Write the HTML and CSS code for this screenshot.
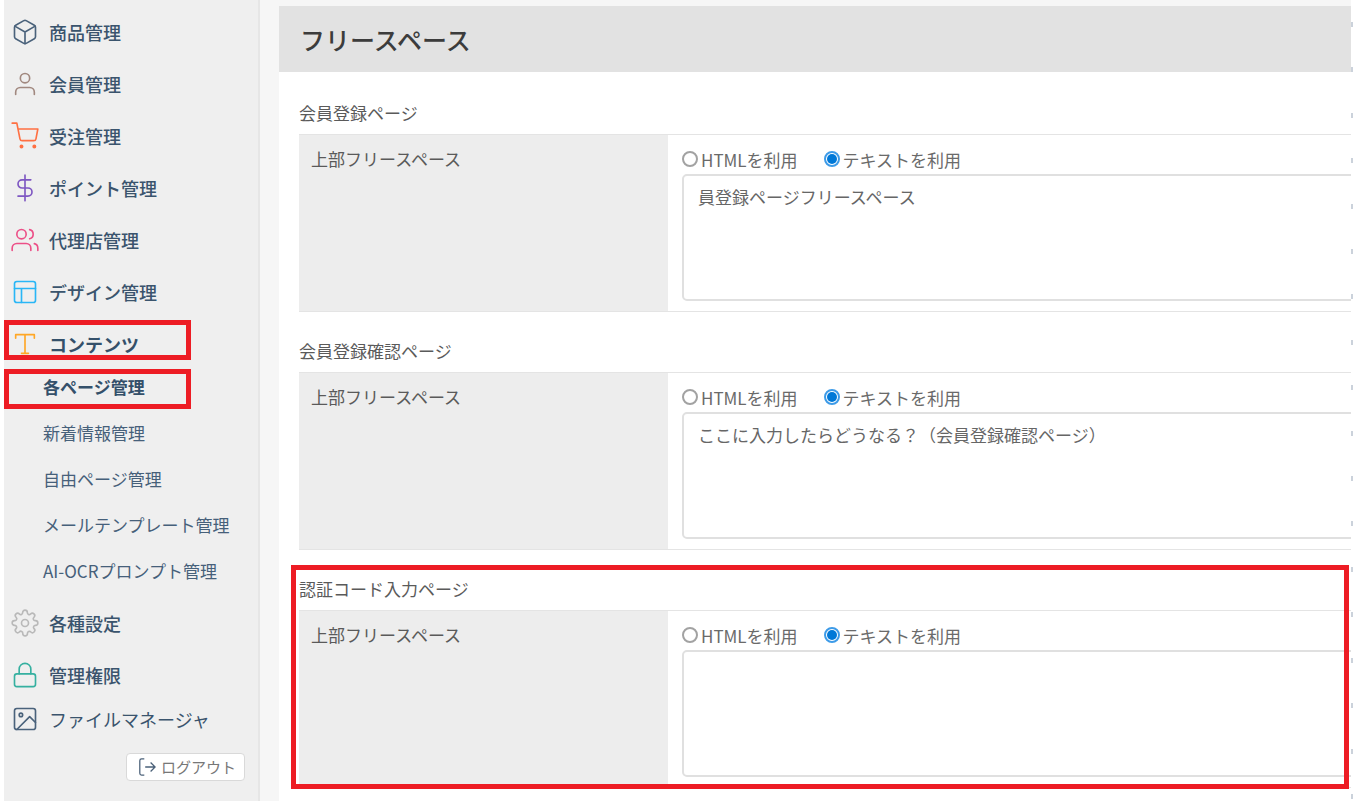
FILE: index.html
```html
<!DOCTYPE html>
<html lang="ja">
<head>
<meta charset="utf-8">
<meta name="viewport" content="width=device-width, initial-scale=1">
<title>フリースペース</title>
<link rel="stylesheet" href="styles.css">
</head>
<body>
<div class="app">
  <aside class="sidebar">
    <nav>
      <ul class="menu">
        <li><a class="item" href="#"><svg class="icon navy" viewBox="0 0 24 24"><path d="M21 16V8a2 2 0 0 0-1-1.73l-7-4a2 2 0 0 0-2 0l-7 4A2 2 0 0 0 3 8v8a2 2 0 0 0 1 1.73l7 4a2 2 0 0 0 2 0l7-4A2 2 0 0 0 21 16z"/><path d="M3.27 6.96 12 12.01l8.73-5.05M12 22.08V12"/></svg>商品管理</a></li>
        <li><a class="item" href="#"><svg class="icon brown" viewBox="0 0 24 24"><path d="M20 21v-2a4 4 0 0 0-4-4H8a4 4 0 0 0-4 4v2"/><circle cx="12" cy="7" r="4"/></svg>会員管理</a></li>
        <li><a class="item" href="#"><svg class="icon orange" viewBox="0 0 24 24"><circle class="dot" cx="9" cy="21" r="1"/><circle class="dot" cx="20" cy="21" r="1"/><path d="M1 1h4l2.68 13.39a2 2 0 0 0 2 1.61h9.72a2 2 0 0 0 2-1.61L23 6H6"/></svg>受注管理</a></li>
        <li><a class="item" href="#"><svg class="icon purple" viewBox="0 0 24 24"><path d="M12 1v22M17 5H9.500a3.500 3.500 0 0 0 0 7h5a3.500 3.500 0 0 1 0 7H6"/></svg>ポイント管理</a></li>
        <li><a class="item" href="#"><svg class="icon pink" viewBox="0 0 24 24"><path d="M17 21v-2a4 4 0 0 0-4-4H5a4 4 0 0 0-4 4v2"/><circle cx="9" cy="7" r="4"/><path d="M23 21v-2a4 4 0 0 0-3-3.870M16 3.130a4 4 0 0 1 0 7.750"/></svg>代理店管理</a></li>
        <li><a class="item" href="#"><svg class="icon sky" viewBox="0 0 24 24"><rect x="3" y="3" width="18" height="18" rx="2"/><path d="M3 9h18M9 21V9"/></svg>デザイン管理</a></li>
        <li>
          <a class="item current marked" href="#"><svg class="icon amber" viewBox="0 0 24 24"><path d="M4 7V4h16v3M9 20h6M12 4v16"/></svg>コンテンツ</a>
          <ul class="submenu">
            <li><a class="subitem current marked" href="#">各ページ管理</a></li>
            <li><a class="subitem" href="#">新着情報管理</a></li>
            <li><a class="subitem" href="#">自由ページ管理</a></li>
            <li><a class="subitem" href="#">メールテンプレート管理</a></li>
            <li><a class="subitem" href="#">AI-OCRプロンプト管理</a></li>
          </ul>
        </li>
      </ul>
      <ul class="menu settings">
        <li><a class="item" href="#"><svg class="icon gray" viewBox="0 0 24 24"><circle cx="12" cy="12" r="3"/><path d="M19.400 15a1.650 1.650 0 0 0 .33 1.820l.06.06a2 2 0 0 1-2.830 2.830l-.06-.06a1.650 1.650 0 0 0-2.800 1.170V21a2 2 0 0 1-4 0v-.09a1.650 1.650 0 0 0-2.900-1.260l-.06.06a2 2 0 0 1-2.830-2.830l.06-.06A1.650 1.650 0 0 0 3.090 14H3a2 2 0 0 1 0-4h.09a1.650 1.650 0 0 0 1.260-2.900l-.06-.06a2 2 0 0 1 2.830-2.830l.06.06A1.650 1.650 0 0 0 10 3.090V3a2 2 0 0 1 4 0v.09a1.650 1.650 0 0 0 2.820 1.180l.06-.06a2 2 0 0 1 2.830 2.830l-.06.06A1.650 1.650 0 0 0 20.910 10H21a2 2 0 0 1 0 4h-.09a1.650 1.650 0 0 0-1.510 1z"/></svg>各種設定</a></li>
        <li><a class="item" href="#"><svg class="icon teal" viewBox="0 0 24 24"><rect x="3" y="11" width="18" height="11" rx="2"/><path d="M7 11V7a5 5 0 0 1 10 0v4"/></svg>管理権限</a></li>
      </ul>
      <a class="item files" href="#"><svg class="icon navy" viewBox="0 0 24 24"><rect x="3" y="3" width="18" height="18" rx="2"/><circle cx="8.500" cy="8.500" r="1.500"/><path d="m21 15-5-5L5 21"/></svg>ファイルマネージャ</a>
    </nav>
    <button class="logout" type="button"><svg class="logout-icon" viewBox="0 0 20 20"><path d="M7 1H4a2 2 0 0 0-2 2v14a2 2 0 0 0 2 2h3M8 10h11M14 5l5 5-5 5"/></svg>ログアウト</button>
  </aside>

  <main class="panel">
    <h1 class="title">フリースペース</h1>
    <form class="sections">
      <section class="section">
        <h2 class="heading">会員登録ページ</h2>
        <div class="row">
          <div class="name" id="name-register">上部フリースペース</div>
          <div class="field">
            <div class="choices">
              <label class="choice"><input class="radio" type="radio" name="register">HTMLを利用</label>
              <label class="choice"><input class="radio" type="radio" name="register" checked>テキストを利用</label>
            </div>
            <textarea class="text" aria-labelledby="name-register">員登録ページフリースペース</textarea>
          </div>
        </div>
      </section>
      <section class="section">
        <h2 class="heading">会員登録確認ページ</h2>
        <div class="row">
          <div class="name" id="name-confirm">上部フリースペース</div>
          <div class="field">
            <div class="choices">
              <label class="choice"><input class="radio" type="radio" name="confirm">HTMLを利用</label>
              <label class="choice"><input class="radio" type="radio" name="confirm" checked>テキストを利用</label>
            </div>
            <textarea class="text" aria-labelledby="name-confirm">ここに入力したらどうなる？（会員登録確認ページ）</textarea>
          </div>
        </div>
      </section>
      <section class="section marked-section">
        <h2 class="heading">認証コード入力ページ</h2>
        <div class="row">
          <div class="name" id="name-code">上部フリースペース</div>
          <div class="field">
            <div class="choices">
              <label class="choice"><input class="radio" type="radio" name="code">HTMLを利用</label>
              <label class="choice"><input class="radio" type="radio" name="code" checked>テキストを利用</label>
            </div>
            <textarea class="text" aria-labelledby="name-code"></textarea>
          </div>
        </div>
      </section>
    </form>
  </main>

  <div class="ticks" aria-hidden="true"><i></i><i></i><i></i><i></i><i></i><i></i><i></i><i></i><i></i><i></i><i></i><i></i><i></i><i></i><i></i><i></i><i></i><i></i></div>
</div>
</body>
</html>
```
FILE: styles.css
```css
*, *::after { box-sizing: border-box; }

body {
  margin: 0;
  background: #fff;
  color: #5a5a5a;
  font-family: "Noto Sans CJK JP", sans-serif;
  font-size: 17px;
  line-height: 24px;
}

ul { margin: 0; padding: 0; list-style: none; }
a { color: inherit; text-decoration: none; }

.app {
  display: flex;
  min-height: 100vh;
  padding-left: 4px;
  overflow: hidden;
}

/* Sidebar */
.sidebar {
  flex: none;
  width: 256px;
  padding-top: 11px;
  background: #efefef;
  border-right: 2px solid #e6e6e6;
  color: #3a546d;
}
.menu { display: flex; flex-direction: column; gap: 10px; }
.settings { margin-top: 8px; }
.item {
  position: relative;
  display: flex;
  align-items: center;
  gap: 10px;
  height: 42px;
  padding-left: 7px;
  font-size: 18px;
  font-weight: 500;
}
.files { margin-top: 2px; font-weight: 400; }
.submenu { margin-top: -1px; }
.subitem {
  position: relative;
  display: flex;
  align-items: center;
  height: 46px;
  padding-left: 39px;
  color: #46607a;
}
.current { color: #34506a; font-weight: 700; }
.marked::after {
  content: "";
  position: absolute;
  top: 50%;
  left: 0;
  width: 187px;
  height: 40px;
  margin-top: -24px;
  border: 5px solid #ed1c24;
}
.subitem.marked::after { margin-top: -18px; }

.icon {
  flex: none;
  width: 28px;
  height: 28px;
  fill: none;
  stroke: currentColor;
  stroke-width: 1.4;
  stroke-linecap: round;
  stroke-linejoin: round;
}
.dot { fill: currentColor; }
.navy { color: #4a627b; }
.brown { color: #a1887f; }
.orange { color: #ff7043; }
.purple { color: #7e57c2; }
.pink { color: #ec4f87; }
.sky { color: #29b6f6; }
.amber { color: #ffa726; }
.gray { color: #b9b9b9; }
.teal { color: #35b0a0; }

.logout {
  display: flex;
  align-items: center;
  gap: 5px;
  height: 28px;
  margin: 13px 13px 0 auto;
  padding: 0 8px 0 11px;
  background: #fff;
  border: 1px solid #d9d9d9;
  border-radius: 4px;
  color: #777;
  font: inherit;
  font-size: 15px;
}
.logout-icon {
  width: 18px;
  height: 18px;
  fill: none;
  stroke: #4a6078;
  stroke-width: 1.4;
}

/* Content */
.panel {
  flex: 1;
  min-width: 0;
  overflow: hidden;
  border-top: 6px solid #f6f6f6;
  border-left: 19px solid #f6f6f6;
}
.title {
  margin: 0;
  padding: 17px 21px;
  background: #e2e2e2;
  color: #3c3c3c;
  font-size: 25px;
  font-weight: 500;
  line-height: 32px;
}
.sections { padding: 2px 0 0 20px; }
.section { position: relative; }
.heading {
  margin: 0;
  padding: 27px 0 9px;
  font-size: 17px;
  font-weight: 400;
  line-height: 24px;
}
/* The row runs on past the visible edge of the panel */
.row {
  display: flex;
  width: calc(100% + 60px);
  border-top: 1px solid #e4e4e4;
  border-bottom: 1px solid #e4e4e4;
}
.name {
  flex: none;
  width: 369px;
  padding: 12px;
  background: #ededed;
}
.field { flex: 1; padding: 13px 14px 10px; }
.choices { display: flex; gap: 26px; height: 26px; }
.choice {
  display: flex;
  align-items: center;
  gap: 3px;
  color: #6a6a6a;
  height: 24px;
}
.radio {
  appearance: none;
  width: 16px;
  height: 16px;
  margin: 0 0 2px;
  background: #fff;
  border: 2px solid #a2a2a2;
  border-radius: 50%;
}
.radio:checked {
  padding: 1px;
  border-color: #3d9be8;
  background: #0078d7 content-box;
}
.text {
  display: block;
  width: 100%;
  height: 127px;
  padding: 9px 14px;
  border: 2px solid #e0e0e0;
  border-radius: 5px;
  background: #fff;
  color: #666;
  font: inherit;
  resize: none;
}
.marked-section::after {
  content: "";
  position: absolute;
  top: 15px;
  right: 2px;
  bottom: -1px;
  left: -8px;
  border: 5px solid #ed1c24;
  pointer-events: none;
}

/* Tick marks along the right edge */
.ticks {
  display: flex;
  flex: none;
  flex-direction: column;
  justify-content: space-between;
  width: 2px;
  padding: 22px 0 2px;
}
.ticks i { height: 5px; background: #cbd2db; }
```
